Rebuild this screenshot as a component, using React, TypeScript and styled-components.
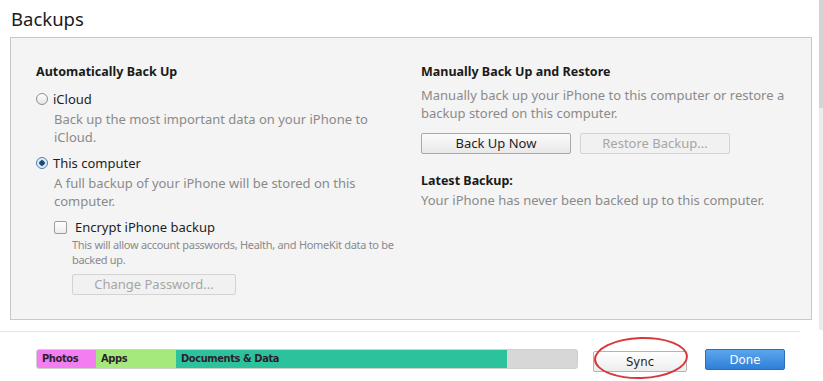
import styled, { createGlobalStyle } from "styled-components";

const GlobalStyle = createGlobalStyle`
  html, body {
    margin: 0;
    padding: 0;
    background: #ffffff;
  }
  body {
    font-family: "Noto Sans", "Open Sans", sans-serif;
    color: #1e1e1e;
  }
`;

const Page = styled.div`
  display: flex;
  width: 823px;
  height: 381px;
  overflow: hidden;
  background: #ffffff;
`;

const Main = styled.div`
  display: flex;
  flex-direction: column;
  width: 819px;
`;

const ScrollTrack = styled.div`
  width: 4px;
  height: 330px;
  background: linear-gradient(#d4d4d4 0, #d4d4d4 108px, #ececec 108px);
`;

const Title = styled.h1`
  margin: 0;
  padding-left: 11px;
  height: 37px;
  line-height: 37px;
  font-size: 18.5px;
  font-weight: 400;
  color: #1a1a1a;
`;

const Panel = styled.section`
  display: grid;
  grid-template-columns: 385px 1fr;
  box-sizing: border-box;
  margin-left: 10px;
  width: 802px;
  height: 283px;
  padding: 25px 20px 0 25px;
  border: 1px solid #c8c8c8;
  background: #f4f4f4;
`;

const Column = styled.div`
  display: flex;
  flex-direction: column;
`;

const Heading = styled.div<{ $gap?: number }>`
  margin-top: ${(p) => p.$gap ?? 0}px;
  font-size: 12.5px;
  font-weight: 700;
  line-height: 18px;
  color: #1a1a1a;
`;

const Option = styled.label<{ $gap?: number }>`
  display: flex;
  align-items: center;
  gap: 5px;
  margin-top: ${(p) => p.$gap ?? 0}px;
  font-size: 13px;
  line-height: 18px;
  color: #1e1e1e;
`;

const Radio = styled.span<{ $checked?: boolean }>`
  box-sizing: border-box;
  width: 12px;
  height: 12px;
  border-radius: 50%;
  border: 1px solid ${(p) => (p.$checked ? "#4a7fae" : "#8f8f8f")};
  background: ${(p) =>
    p.$checked
      ? "radial-gradient(circle, #1d3f66 0, #2a5585 2.5px, #cfe3f5 3px, #e9f2fb 5px)"
      : "linear-gradient(#ffffff, #e4e4e4)"};
`;

const Checkbox = styled.span`
  box-sizing: border-box;
  width: 13px;
  height: 13px;
  margin-right: 3px;
  border-radius: 2px;
  border: 1px solid #9c9c9c;
  background: linear-gradient(#ffffff, #ececec);
`;

const Description = styled.p<{ $indent?: number; $gap?: number }>`
  margin: ${(p) => p.$gap ?? 0}px 0 0 ${(p) => p.$indent ?? 0}px;
  font-size: 13px;
  line-height: 18px;
  color: #8a8a8a;
`;

const SmallNote = styled.p`
  margin: 1px 0 0 36px;
  font-size: 11px;
  line-height: 15px;
  letter-spacing: -0.3px;
  color: #8a8a8a;
`;

const Indent = styled.div<{ $indent: number }>`
  padding-left: ${(p) => p.$indent}px;
`;

const ButtonRow = styled.div<{ $gap?: number }>`
  display: flex;
  gap: 9px;
  margin-top: ${(p) => p.$gap ?? 0}px;
`;

const Button = styled.button<{ $width: number; $disabled?: boolean }>`
  box-sizing: border-box;
  width: ${(p) => p.$width}px;
  height: 21px;
  padding: 0;
  border-radius: 2px;
  border: 1px solid ${(p) => (p.$disabled ? "#d3d3d3" : "#a9a9a9")};
  background: ${(p) =>
    p.$disabled ? "#f1f1f1" : "linear-gradient(#fbfbfb, #e8e8e8)"};
  font-family: "Noto Sans", "Open Sans", sans-serif;
  font-size: 13px;
  line-height: 19px;
  color: ${(p) => (p.$disabled ? "#a6a6a6" : "#1e1e1e")};
`;

const Footer = styled.footer`
  display: flex;
  align-items: flex-start;
  margin-top: 11px;
  width: 800px;
  height: 49px;
  padding: 17px 0 0 36px;
  box-sizing: border-box;
  border-top: 1px solid #e6e6e6;
`;

const StorageBar = styled.div`
  display: flex;
  width: 542px;
  height: 20px;
  border-radius: 3px;
  overflow: hidden;
  background: #d7d7d7;
  border: 1px solid #cfcfcf;
  box-sizing: border-box;
`;

const Segment = styled.div<{ $width: number; $color: string }>`
  width: ${(p) => p.$width}px;
  background: ${(p) => p.$color};
  padding-left: 5px;
  box-sizing: border-box;
  font-family: "DejaVu Sans Condensed", "DejaVu Sans", sans-serif;
  font-stretch: condensed;
  font-size: 11px;
  font-weight: 700;
  line-height: 18px;
  letter-spacing: -0.4px;
  color: #2e1f2e;
`;

const SyncWrap = styled.div`
  position: relative;
  margin-left: 15px;
`;

const FooterButton = styled.button<{ $primary?: boolean; $width: number }>`
  box-sizing: border-box;
  width: ${(p) => p.$width}px;
  height: 21px;
  padding: 0;
  border-radius: 2px;
  border: 1px solid ${(p) => (p.$primary ? "#2b6db8" : "#b4b4b4")};
  background: ${(p) =>
    p.$primary
      ? "linear-gradient(#5aa6ee, #2f7fd6)"
      : "linear-gradient(#ffffff, #ededed)"};
  font-family: "DejaVu Sans Condensed", "DejaVu Sans", sans-serif;
  font-stretch: condensed;
  font-size: 13px;
  line-height: 19px;
  color: ${(p) => (p.$primary ? "#ffffff" : "#1e1e1e")};
`;

const DoneButton = styled(FooterButton)`
  margin-left: 18px;
`;

const Highlight = styled.span`
  position: absolute;
  left: 1px;
  top: -12px;
  width: 94px;
  height: 42px;
  border: 2px solid #d8383c;
  border-radius: 50%;
  box-sizing: border-box;
  transform: rotate(-2deg);
  pointer-events: none;
`;

export default function App() {
  return (
    <>
      <GlobalStyle />
      <Page>
        <Main>
          <Title>Backups</Title>
          <Panel>
            <Column>
              <Heading>Automatically Back Up</Heading>
              <Option $gap={9}>
                <Radio />
                iCloud
              </Option>
              <Description $indent={18} $gap={2}>
                Back up the most important data on your iPhone to
                <br />
                iCloud.
              </Description>
              <Option $gap={8}>
                <Radio $checked />
                This computer
              </Option>
              <Description $indent={18} $gap={2}>
                A full backup of your iPhone will be stored on this
                <br />
                computer.
              </Description>
              <Indent $indent={18}>
                <Option $gap={8}>
                  <Checkbox />
                  Encrypt iPhone backup
                </Option>
              </Indent>
              <SmallNote>
                This will allow account passwords, Health, and HomeKit data to be
                <br />
                backed up.
              </SmallNote>
              <Indent $indent={36}>
                <ButtonRow $gap={7}>
                  <Button $width={164} $disabled>
                    Change Password...
                  </Button>
                </ButtonRow>
              </Indent>
            </Column>
            <Column>
              <Heading>Manually Back Up and Restore</Heading>
              <Description $gap={5}>
                Manually back up your iPhone to this computer or restore a
                <br />
                backup stored on this computer.
              </Description>
              <ButtonRow $gap={11}>
                <Button $width={150}>Back Up Now</Button>
                <Button $width={150} $disabled>
                  Restore Backup...
                </Button>
              </ButtonRow>
              <Heading $gap={18}>Latest Backup:</Heading>
              <Description $gap={1}>
                Your iPhone has never been backed up to this computer.
              </Description>
            </Column>
          </Panel>
          <Footer>
            <StorageBar>
              <Segment $width={59} $color="#f27ef2">
                Photos
              </Segment>
              <Segment $width={80} $color="#a5e87b">
                Apps
              </Segment>
              <Segment $width={331} $color="#2cc39c">
                Documents &amp; Data
              </Segment>
            </StorageBar>
            <SyncWrap>
              <FooterButton $width={94}>Sync</FooterButton>
              <Highlight />
            </SyncWrap>
            <DoneButton $primary $width={80}>
              Done
            </DoneButton>
          </Footer>
        </Main>
        <ScrollTrack />
      </Page>
    </>
  );
}
